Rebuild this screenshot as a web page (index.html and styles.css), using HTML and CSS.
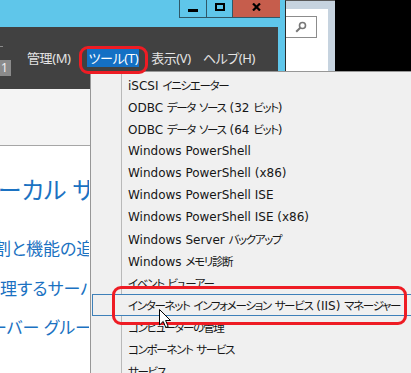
FILE: index.html
```html
<!DOCTYPE html>
<html lang="ja">
<head>
<meta charset="utf-8">
<link rel="stylesheet" href="styles.css">
</head>
<body>
<div class="screen">
  <div class="top">
    <div class="mainwin">
      <div class="titlebar">
        <div class="winbtns">
          <div class="wb wb-min"><span class="ico-min"></span></div>
          <div class="wb wb-max"><span class="ico-max"></span></div>
          <div class="wb wb-close">
            <svg width="9" height="8" viewBox="0 0 9 8"><path d="M1 0.5 L8 7.5 M8 0.5 L1 7.5" stroke="#000" stroke-width="2.2" fill="none"/></svg>
          </div>
        </div>
      </div>
      <div class="frame">
        <div class="toolbar">
          <div class="tb-left"><span class="tick"></span><span class="badge">1</span></div>
          <nav class="menubar">
            <span class="mb-item">管理(M)</span>
            <span class="mb-item active">ツール(T)</span>
            <span class="mb-item">表示(V)</span>
            <span class="mb-item">ヘルプ(H)</span>
          </nav>
        </div>
        <div class="content">
          <div class="content-head"></div>
          <div class="content-body">
            <div class="clip title"><span>ーカル サー</span></div>
            <div class="clip link link-1"><span>割と機能の追</span></div>
            <div class="clip link link-2"><span>理するサーバ</span></div>
            <div class="clip link link-3"><span>ーバー グルー</span></div>
          </div>
        </div>
      </div>
    </div>
    <div class="sidewin">
      <div class="side-panel">
        <div class="search">
          <svg width="12" height="12" viewBox="0 0 12 12"><circle cx="7.5" cy="4.5" r="3" stroke="#777" stroke-width="1.6" fill="none"/><path d="M5.3 6.7 L1.2 10.8" stroke="#777" stroke-width="2" fill="none"/></svg>
        </div>
      </div>
    </div>
    <div class="black"></div>
  </div>

  <div class="menu">
    <div class="row"><span class="g"></span><span class="t">iSCSI <span class="k">イニシエーター</span></span></div>
    <div class="row"><span class="g"></span><span class="t">ODBC <span class="k">データ</span> <span class="k">ソース</span> (32 <span class="k">ビット</span>)</span></div>
    <div class="row"><span class="g"></span><span class="t">ODBC <span class="k">データ</span> <span class="k">ソース</span> (64 <span class="k">ビット</span>)</span></div>
    <div class="row"><span class="g"></span><span class="t">Windows PowerShell</span></div>
    <div class="row"><span class="g"></span><span class="t">Windows PowerShell (x86)</span></div>
    <div class="row"><span class="g"></span><span class="t">Windows PowerShell ISE</span></div>
    <div class="row"><span class="g"></span><span class="t">Windows PowerShell ISE (x86)</span></div>
    <div class="row"><span class="g"></span><span class="t">Windows Server <span class="k">バックアップ</span></span></div>
    <div class="row"><span class="g"></span><span class="t">Windows <span class="k">メモリ診断</span></span></div>
    <div class="row"><span class="g"></span><span class="t"><span class="k">イベント</span> <span class="k">ビューアー</span></span></div>
    <div class="row hover"><span class="g"></span><span class="t"><span class="k">インターネット</span> <span class="k">インフォメーション</span> <span class="k">サービス</span> (IIS) <span class="k">マネージャー</span></span></div>
    <div class="row"><span class="g"></span><span class="t"><span class="k">コンピューターの管理</span></span></div>
    <div class="row"><span class="g"></span><span class="t"><span class="k">コンポーネント</span> <span class="k">サービス</span></span></div>
    <div class="row"><span class="g"></span><span class="t"><span class="k">サービス</span></span></div>
  </div>

  <div class="ring ring-tools"></div>
  <div class="ring ring-iis"></div>

  <svg class="cursor" width="13" height="20" viewBox="0 0 13 20"><path d="M0.5 0.5 L0.5 16 L4.2 12.4 L6.8 18.5 L9.2 17.5 L6.6 11.5 L11.5 11.5 Z" fill="#fff" stroke="#000" stroke-width="1" stroke-linejoin="miter"/></svg>
</div>
</body>
</html>
```

FILE: styles.css
```css
* { box-sizing: border-box; }
html, body { margin: 0; padding: 0; }
body {
  width: 411px;
  height: 373px;
  overflow: hidden;
  font-family: "Noto Sans", "Noto Sans CJK JP", sans-serif;
  background: #fff;
}
.screen {
  position: relative;
  width: 411px;
  height: 373px;
  overflow: hidden;
}
.top {
  display: flex;
  height: 373px;
}
.mainwin {
  width: 285px;
  display: flex;
  flex-direction: column;
  background: #5fc6ea;
}
.titlebar {
  height: 27px;
  display: flex;
}
.winbtns {
  display: flex;
  margin-left: 179px;
  height: 18px;
  border-left: 1px solid #2f5868;
  border-bottom: 1px solid #2f5868;
}
.wb {
  display: flex;
  align-items: center;
  justify-content: center;
}
.wb-min { width: 27px; border-right: 1px solid #2f5868; }
.wb-max { width: 26px; border-right: 1px solid #2f5868; }
.wb-close { width: 47px; background: #c65d4c; }
.ico-min { width: 10px; height: 3px; background: #000; margin-top: 4px; }
.ico-max { width: 10px; height: 8px; border: 2px solid #000; margin-top: -4px; }
.wb-close svg { margin-top: -3px; }
.frame {
  flex: 1;
  display: flex;
  flex-direction: column;
}
.toolbar {
  height: 62px;
  width: 278px;
  background: #414141;
  display: flex;
  align-items: flex-start;
}
.tb-left {
  width: 21px;
  display: flex;
  flex-direction: column;
}
.tick {
  width: 3px;
  height: 1px;
  background: #8a8a8a;
  margin-top: 19px;
}
.badge {
  width: 11px;
  height: 16px;
  margin-top: 13px;
  background: #8b8b8b;
  color: #f0f0f0;
  font-size: 12px;
  line-height: 16px;
  padding-left: 1px;
}
.menubar {
  display: flex;
  margin-top: 22px;
  font-feature-settings: "palt";
}
.mb-item {
  color: #e4e4e4;
  font-size: 13px;
  height: 18px;
  line-height: 18px;
  padding: 0 6px;
  letter-spacing: -0.4px;
  white-space: nowrap;
}
.mb-item.active {
  background: #1470c4;
  color: #fff;
  padding: 0 1px 0 2px;
  margin: 0 6px 0 10px;
}
.content {
  flex: 1;
  width: 278px;
  background: #fff;
  display: flex;
  flex-direction: column;
}
.content-head {
  height: 57px;
  background: #f4f4f4;
  border-bottom: 1px solid #a6a6a6;
}
.content-body {
  width: 89px;
  color: #1b72c2;
  white-space: nowrap;
  font-feature-settings: "palt";
}
.clip {
  width: 89px;
  overflow: hidden;
}
.title {
  font-size: 24px;
  margin-top: 28px;
  line-height: 32px;
}
.title span { margin-left: -2px; }
.link {
  font-size: 17px;
  line-height: 24px;
}
.link-1 { margin-top: 31px; }
.link-1 span { margin-left: -6px; }
.link-2 { margin-top: 16px; }
.link-3 { margin-top: 15px; }
.link-3 span { margin-left: -10px; }

.sidewin {
  width: 50px;
  height: 71px;
  background: #c6d3df;
  border-left: 1px solid #2b2b2b;
  border-top: 1px solid #5a5a5a;
  padding: 8px 7px 0 0;
}
.side-panel {
  background: #fff;
  height: 100%;
  padding-top: 7px;
}
.search {
  width: 31px;
  height: 22px;
  border: 1px solid #8c8c8c;
  border-left: none;
  display: flex;
  align-items: center;
  padding-left: 9px;
}
.black {
  flex: 1;
  height: 71px;
  background: #000;
}

.menu {
  position: absolute;
  left: 90px;
  top: 71px;
  width: 340px;
  height: 320px;
  background: #f0f0f0;
  border-left: 1px solid #979797;
  border-top: 1px solid #979797;
  padding-top: 2px;
  display: flex;
  flex-direction: column;
}
.row {
  display: flex;
  height: 22px;
  align-items: center;
  font-family: "DejaVu Sans", "Noto Sans CJK JP", sans-serif;
  font-size: 12px;
  color: #161616;
  white-space: nowrap;
}
.row .g {
  width: 31px;
  align-self: stretch;
  border-right: 1px solid #b9b9b9;
  flex: none;
}
.row .t {
  padding-left: 6px;
}
.row .k {
  font-family: "Noto Sans CJK JP", sans-serif;
  font-size: 11.5px;
  font-feature-settings: "palt";
  letter-spacing: -1.3px;
}
.row.hover {
  margin-left: 1px;
  border: 1px solid #3e80b9;
}
.row.hover .g {
  width: 28px;
  border-right: none;
}
.row.hover .t { padding-left: 7px; }

.ring {
  position: absolute;
  border: 3px solid #ee1c24;
  border-radius: 9px;
}
.ring-tools { left: 79px; top: 46px; width: 69px; height: 28px; }
.ring-iis { left: 112px; top: 286px; width: 295px; height: 39px; }
.cursor {
  position: absolute;
  left: 159px;
  top: 309px;
}
```
